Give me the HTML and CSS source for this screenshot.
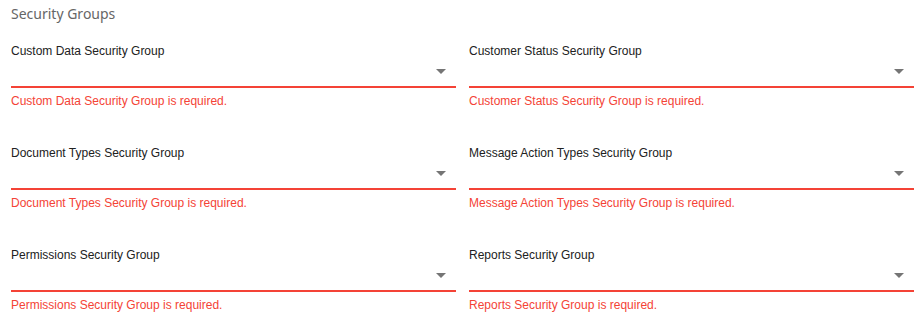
FILE: index.html
```html
<!DOCTYPE html>
<html lang="en">
<head>
  <meta charset="UTF-8">
  <title>Security Groups</title>
  <link rel="stylesheet" href="styles.css">
</head>
<body>
  <div class="panel">
    <h2 class="panel-title">Security Groups</h2>
    <div class="field-grid">
      <div class="field">
        <label>Custom Data Security Group</label>
        <div class="select"><span class="caret"></span></div>
        <div class="error">Custom Data Security Group is required.</div>
      </div>
      <div class="field">
        <label>Customer Status Security Group</label>
        <div class="select"><span class="caret"></span></div>
        <div class="error">Customer Status Security Group is required.</div>
      </div>
      <div class="field">
        <label>Document Types Security Group</label>
        <div class="select"><span class="caret"></span></div>
        <div class="error">Document Types Security Group is required.</div>
      </div>
      <div class="field">
        <label>Message Action Types Security Group</label>
        <div class="select"><span class="caret"></span></div>
        <div class="error">Message Action Types Security Group is required.</div>
      </div>
      <div class="field">
        <label>Permissions Security Group</label>
        <div class="select"><span class="caret"></span></div>
        <div class="error">Permissions Security Group is required.</div>
      </div>
      <div class="field">
        <label>Reports Security Group</label>
        <div class="select"><span class="caret"></span></div>
        <div class="error">Reports Security Group is required.</div>
      </div>
    </div>
  </div>
</body>
</html>
```

FILE: styles.css
```css
/* page */
body {
  margin: 0;
  background: #fff;
  font-family: 'Liberation Sans', Arial, sans-serif;
}
.panel {
  padding: 4px 9px 0 11px;
}
.panel-title {
  margin: 0 0 19px;
  font-family: 'Noto Sans', 'Open Sans', sans-serif;
  font-weight: normal;
  font-size: 14px;
  line-height: 20px;
  color: #666;
}
/* fields */
.field-grid {
  display: grid;
  grid-template-columns: 1fr 1fr;
  column-gap: 13px;
  row-gap: 36px;
}
.field {
  display: flex;
  flex-direction: column;
}
.field label {
  font-size: 12px;
  line-height: 16px;
  color: #212121;
}
.select {
  height: 27px;
  border-bottom: 2px solid #f44336;
  display: flex;
  align-items: center;
  justify-content: flex-end;
  padding-right: 10px;
}
.caret {
  width: 0;
  height: 0;
  border-left: 5px solid transparent;
  border-right: 5px solid transparent;
  border-top: 5px solid #757575;
  margin-top: -2px;
}
.error {
  margin-top: 5px;
  font-size: 12px;
  line-height: 16px;
  color: #f44336;
}
```
